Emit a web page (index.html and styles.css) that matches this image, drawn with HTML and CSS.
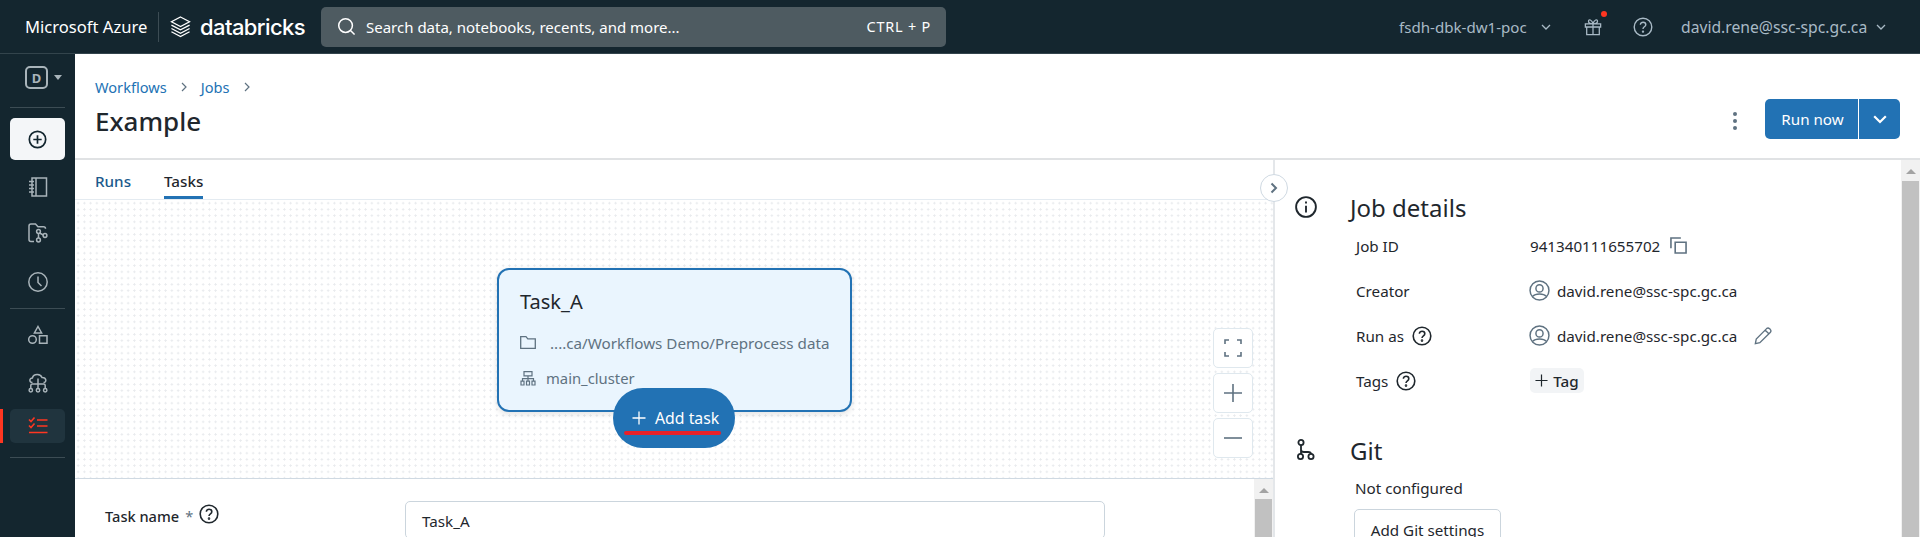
FILE: index.html
```html
<!DOCTYPE html>
<html lang="en">
<head>
    <meta charset="UTF-8" />
    <title>Example - Databricks</title>
    <link rel="stylesheet" href="styles.css">
</head>
<body>

<header class="topbar">
    <span class="brand-azure">Microsoft Azure</span>
    <span class="brand-sep"></span>
    <svg class="brand-logo" viewBox="0 0 22 24" fill="none" stroke="#fff" stroke-width="1.3">
        <path d="M11 1.5 20.5 6.5 11 11.5 1.5 6.5Z"/>
        <path d="M1.5 10 11 15 20.5 10"/>
        <path d="M1.5 13.5 11 18.5 20.5 13.5"/>
        <path d="M1.5 17 11 22 20.5 17"/>
    </svg>
    <span class="brand-name">databricks</span>
    <div class="search">
        <svg class="search-icon" viewBox="0 0 20 20" fill="none" stroke="#fff" stroke-width="1.6">
            <circle cx="9" cy="9" r="7.2"/>
            <path d="M14.2 14.2 18.5 18.5"/>
        </svg>
        <span class="search-text">Search data, notebooks, recents, and more...</span>
        <span class="search-key">CTRL + P</span>
    </div>
    <div class="top-right">
        <span class="top-label">fsdh-dbk-dw1-poc</span>
        <svg class="top-chevron" viewBox="0 0 10 6" fill="none" stroke="#a9bac6" stroke-width="1.3"><path d="M1 1 5 5 9 1"/></svg>
        <span class="gift">
            <svg viewBox="0 0 20 20" fill="none" stroke="#a9bac6" stroke-width="1.4">
                <path d="M1.5 6.5H18.5V10H1.5ZM3 10V18.5H17V10M10 6.5V18.5M10 6.5C7 6.5 5 5.5 5 3.6 5 1.2 8.8 1.4 10 6.5 11.2 1.4 15 1.2 15 3.6 15 5.5 13 6.5 10 6.5Z"/>
            </svg>
            <i class="gift-dot"></i>
        </span>
        <svg class="top-help" viewBox="0 0 20 20" fill="none" stroke="#a9bac6" stroke-width="1.4">
            <circle cx="10" cy="10" r="8.8"/>
            <path d="M7.4 7.8C7.4 4.4 12.8 4.6 12.8 7.7 12.8 9.8 10 9.8 10 12"/>
            <circle cx="10" cy="14.6" r=".5"/>
        </svg>
        <span class="top-label top-user">david.rene@ssc-spc.gc.ca</span>
        <svg class="top-chevron" viewBox="0 0 10 6" fill="none" stroke="#a9bac6" stroke-width="1.3"><path d="M1 1 5 5 9 1"/></svg>
    </div>
</header>

<div class="app">
    <nav class="sidebar">
        <div class="workspace">
            <span class="workspace-badge">D</span>
            <i class="workspace-caret"></i>
        </div>
        <div class="side-rule"></div>
        <div class="side-new">
            <svg viewBox="0 0 20 20" fill="none" stroke="#13262f" stroke-width="1.8">
                <circle cx="10" cy="10" r="8.6"/>
                <path d="M10 5.6V14.4M5.6 10H14.4"/>
            </svg>
        </div>
        <div class="side-item side-first">
            <svg viewBox="0 0 20 20" fill="none" stroke="#a9b4ba" stroke-width="1.5">
                <path d="M4 1H18.5V19H4ZM8 1V19M1 4.5H6M1 8H6M1 11.5H6M1 15H6"/>
            </svg>
        </div>
        <div class="side-item side-repo">
            <svg viewBox="0 0 20 20" fill="none" stroke="#a9b4ba" stroke-width="1.5">
                <path d="M6 18.5H3C1.8 18.5 1 17.7 1 16.5V3C1 1.8 1.8 1 3 1H7.5L10 3.8H15.5C16.7 3.8 17.5 4.6 17.5 5.8"/>
                <circle cx="10.5" cy="8.5" r="1.9"/>
                <circle cx="10.5" cy="17" r="1.9"/>
                <circle cx="17" cy="12.5" r="1.9"/>
                <path d="M10.5 10.4V15.1M11.6 10 15.3 12"/>
            </svg>
        </div>
        <div class="side-item side-clock">
            <svg viewBox="0 0 20 20" fill="none" stroke="#a9b4ba" stroke-width="1.5">
                <circle cx="10" cy="10" r="9.2"/>
                <path d="M10 4.5V10.5L13.5 14"/>
            </svg>
        </div>
        <div class="side-rule side-rule-mid"></div>
        <div class="side-item side-shapes">
            <svg viewBox="0 0 20 20" fill="none" stroke="#a9b4ba" stroke-width="1.5">
                <path d="M10 1.5 13.6 8H6.4Z"/>
                <circle cx="4.5" cy="14.5" r="3.8"/>
                <path d="M11.5 10.8H19V18.2H11.5Z"/>
            </svg>
        </div>
        <div class="side-item side-cloud">
            <svg viewBox="0 0 20 20" fill="none" stroke="#a9b4ba" stroke-width="1.5">
                <path d="M4.5 9.5C1 9.5 1 5 4.4 5 5.4 .6 12.6 .4 14 4.6 18.6 4.4 19 9.5 15.5 9.5"/>
                <path d="M10 5.5V16M2.8 16V12.5C2.8 11.6 3.4 11 4.3 11H15.7C16.6 11 17.2 11.6 17.2 12.5V16"/>
                <circle cx="2.8" cy="17.3" r="1.7"/>
                <circle cx="10" cy="17.3" r="1.7"/>
                <circle cx="17.2" cy="17.3" r="1.7"/>
            </svg>
        </div>
        <div class="side-item side-active">
            <svg viewBox="0 0 20 20" fill="none" stroke="#ff3621" stroke-width="1.6">
                <path d="M1 3.5 3 5.5 6.5 1.5M1 9.5 3 11.5 6.5 7.5M9 4H19.5M9 10H19.5M1 16.5H19.5"/>
            </svg>
        </div>
        <div class="side-rule side-rule-end"></div>
    </nav>

    <main class="page">
        <section class="page-head">
            <div>
                <div class="crumbs">
                    <a>Workflows</a>
                    <svg viewBox="0 0 6 10" fill="none" stroke="#5f7281" stroke-width="1.2"><path d="M1 1 5 5 1 9"/></svg>
                    <a>Jobs</a>
                    <svg viewBox="0 0 6 10" fill="none" stroke="#5f7281" stroke-width="1.2"><path d="M1 1 5 5 1 9"/></svg>
                </div>
                <h1 class="page-title">Example</h1>
            </div>
            <div class="page-actions">
                <span class="kebab"><i></i><i></i><i></i></span>
                <div class="run-btn">
                    <span class="run-main">Run now</span>
                    <span class="run-more">
                        <svg viewBox="0 0 14 9" fill="none" stroke="#fff" stroke-width="2.2"><path d="M1.2 1.2 7 7 12.8 1.2"/></svg>
                    </span>
                </div>
            </div>
        </section>

        <section class="split">
            <div class="left">
                <div class="tabs">
                    <span class="tab">Runs</span>
                    <span class="tab tab-on">Tasks</span>
                </div>
                <div class="canvas">
                    <div class="task-node">
                        <div class="task-name">Task_A</div>
                        <div class="task-line task-path">
                            <svg viewBox="0 0 16 13" fill="none" stroke="#5f7281" stroke-width="1.3"><path d="M.7.7H6L7.8 2.8H15.3V12.3H.7Z"/></svg>
                            <span>....ca/Workflows Demo/Preprocess data</span>
                        </div>
                        <div class="task-line task-cluster">
                            <svg viewBox="0 0 16 15" fill="none" stroke="#5f7281" stroke-width="1.2"><path d="M4 .7H12V4.8H4ZM8 4.8V10M2.5 10V7.6H13.5V10M1 10.2H4V14H1ZM6.5 10.2H9.5V14H6.5ZM12 10.2H15V14H12Z"/></svg>
                            <span>main_cluster</span>
                        </div>
                    </div>
                    <div class="add-task">
                        <svg viewBox="0 0 14 14" fill="none" stroke="#fff" stroke-width="1.3"><path d="M7 .5V13.5M.5 7H13.5"/></svg>
                        <span>Add task</span>
                        <i class="add-mark"></i>
                    </div>
                    <div class="zoom-tools">
                        <span class="zoom-btn">
                            <svg viewBox="0 0 18 18" fill="none" stroke="#5f7281" stroke-width="1.6"><path d="M1 5V1H5M13 1H17V5M17 13V17H13M5 17H1V13"/></svg>
                        </span>
                        <span class="zoom-btn">
                            <svg viewBox="0 0 18 18" fill="none" stroke="#5f7281" stroke-width="1.6"><path d="M9 0V18M0 9H18"/></svg>
                        </span>
                        <span class="zoom-btn">
                            <svg viewBox="0 0 18 18" fill="none" stroke="#5f7281" stroke-width="1.6"><path d="M0 9H18"/></svg>
                        </span>
                    </div>
                </div>
                <div class="task-form">
                    <div class="form-body">
                        <label class="form-label">Task name <em>*</em>
                            <svg class="help" viewBox="0 0 20 20" fill="none" stroke="#1f272d" stroke-width="1.6">
                                <circle cx="10" cy="10" r="8.8"/>
                                <path d="M7.4 7.8C7.4 4.4 12.8 4.6 12.8 7.7 12.8 9.8 10 9.8 10 12"/>
                                <circle cx="10" cy="14.6" r=".5"/>
                            </svg>
                        </label>
                        <div class="form-input">Task_A</div>
                    </div>
                    <div class="scrollbar">
                        <i class="scroll-up"></i>
                        <i class="scroll-thumb"></i>
                    </div>
                </div>
            </div>

            <aside class="details">
                <span class="collapse">
                    <svg viewBox="0 0 8 12" fill="none" stroke="#5f7281" stroke-width="2"><path d="M1.5 1.5 6 6 1.5 10.5"/></svg>
                </span>
                <div class="details-body">
                    <div class="section-head">
                        <svg viewBox="0 0 20 20" fill="none" stroke="#1f272d" stroke-width="1.7">
                            <circle cx="10" cy="10" r="9"/>
                            <path d="M10 8.8V15M10 5V6.8"/>
                        </svg>
                        <h2>Job details</h2>
                    </div>
                    <div class="row">
                        <span class="row-label">Job ID</span>
                        <span class="row-value">941340111655702
                            <svg class="copy" viewBox="0 0 18 18" fill="none" stroke="#5f7281" stroke-width="1.7"><path d="M11.5 1H1V12M5.5 5.5H17V17H5.5Z"/></svg>
                        </span>
                    </div>
                    <div class="row">
                        <span class="row-label">Creator</span>
                        <span class="row-value">
                            <svg class="avatar" viewBox="0 0 20 20" fill="none" stroke="#5f7281" stroke-width="1.4">
                                <circle cx="10" cy="10" r="9"/>
                                <circle cx="10" cy="8" r="3.4"/>
                                <path d="M3.6 15.5C6 12.6 14 12.6 16.4 15.5"/>
                            </svg>
                            david.rene@ssc-spc.gc.ca
                        </span>
                    </div>
                    <div class="row">
                        <span class="row-label">Run as
                            <svg class="help" viewBox="0 0 20 20" fill="none" stroke="#1f272d" stroke-width="1.6">
                                <circle cx="10" cy="10" r="8.8"/>
                                <path d="M7.4 7.8C7.4 4.4 12.8 4.6 12.8 7.7 12.8 9.8 10 9.8 10 12"/>
                                <circle cx="10" cy="14.6" r=".5"/>
                            </svg>
                        </span>
                        <span class="row-value">
                            <svg class="avatar" viewBox="0 0 20 20" fill="none" stroke="#5f7281" stroke-width="1.4">
                                <circle cx="10" cy="10" r="9"/>
                                <circle cx="10" cy="8" r="3.4"/>
                                <path d="M3.6 15.5C6 12.6 14 12.6 16.4 15.5"/>
                            </svg>
                            david.rene@ssc-spc.gc.ca
                            <svg class="pencil" viewBox="0 0 20 20" fill="none" stroke="#5f7281" stroke-width="1.5"><path d="M1.5 18.5 2.5 13.5 14 1.8C15 .9 16.2 .9 17.3 1.9L18 2.6C19 3.7 19 5 18 6L6.5 17.5ZM12.5 3.5 16.5 7.5"/></svg>
                        </span>
                    </div>
                    <div class="row">
                        <span class="row-label">Tags
                            <svg class="help" viewBox="0 0 20 20" fill="none" stroke="#1f272d" stroke-width="1.6">
                                <circle cx="10" cy="10" r="8.8"/>
                                <path d="M7.4 7.8C7.4 4.4 12.8 4.6 12.8 7.7 12.8 9.8 10 9.8 10 12"/>
                                <circle cx="10" cy="14.6" r=".5"/>
                            </svg>
                        </span>
                        <span class="row-value">
                            <span class="tag-btn">
                                <svg viewBox="0 0 14 14" fill="none" stroke="#1f272d" stroke-width="1.3"><path d="M7 .5V13.5M.5 7H13.5"/></svg>
                                Tag
                            </span>
                        </span>
                    </div>
                    <div class="section-head section-git">
                        <svg viewBox="0 0 20 22" fill="none" stroke="#1f272d" stroke-width="1.8">
                            <circle cx="5" cy="3.5" r="2.6"/>
                            <circle cx="4.5" cy="17.5" r="2.6"/>
                            <circle cx="15" cy="17.5" r="2.6"/>
                            <path d="M5 6V15M5 10.5C5 12.5 6 13 8 13H12C13.8 13 15 13.5 15 15"/>
                        </svg>
                        <h2>Git</h2>
                    </div>
                    <p class="git-note">Not configured</p>
                    <div class="git-btn">Add Git settings</div>
                </div>
                <div class="scrollbar scrollbar-main">
                    <i class="scroll-up"></i>
                    <i class="scroll-thumb"></i>
                </div>
            </aside>
        </section>
    </main>
</div>

</body>
</html>
```

FILE: styles.css
```css
* {
    box-sizing: border-box;
}

html, body {
    height: 100%;
    margin: 0;
    overflow: hidden;
}

body {
    display: flex;
    flex-direction: column;
    font-family: "Noto Sans", "Open Sans", sans-serif;
    font-size: 15.2px;
    color: #1f272d;
    background-color: #fff;
}

/* top bar */
.topbar {
    height: 54px;
    flex: none;
    display: flex;
    align-items: center;
    padding-left: 25px;
    color: #fff;
    background-color: #14262f;
    border-bottom: 1px solid #33444c;
}

.brand-azure {
    width: 123px;
    font-size: 16.6px;
    white-space: nowrap;
}

.brand-sep {
    width: 1px;
    height: 30px;
    margin: 0 11px 0 10px;
    background-color: #3c4c54;
}

.brand-logo {
    width: 21px;
    height: 24px;
    margin-right: 9px;
}

.brand-name {
    width: 121px;
    font-family: "Inter", sans-serif;
    font-size: 22px;
    font-weight: 500;
    letter-spacing: -.6px;
}

.search {
    width: 625px;
    height: 40px;
    display: flex;
    align-items: center;
    padding: 0 15px 0 16px;
    font-size: 15px;
    background-color: #4e5b61;
    border-radius: 5px;
}

.search-icon {
    width: 19px;
    height: 19px;
    margin-right: 10px;
}

.search-text {
    flex: 1;
}

.search-key {
    font-size: 14.4px;
    letter-spacing: .8px;
}

.top-right {
    flex: 1;
    display: flex;
    align-items: center;
    padding-left: 453px;
    color: #a9bac6;
}

.top-label {
    width: 134px;
    font-size: 15.1px;
    white-space: nowrap;
}

.top-chevron {
    width: 10px;
    height: 6px;
    margin-left: 8px;
}

.gift {
    position: relative;
    width: 18px;
    height: 18px;
    margin-left: 33px;
}

.gift svg {
    display: block;
    width: 18px;
    height: 18px;
}

.gift-dot {
    position: absolute;
    top: -7px;
    right: -5px;
    width: 6px;
    height: 6px;
    background-color: #ff3621;
    border-radius: 50%;
}

.top-help {
    width: 20px;
    height: 20px;
    margin-left: 31px;
}

.top-user {
    width: 187px;
    margin-left: 28px;
    font-size: 15.7px;
}

/* left nav */
.app {
    flex: 1;
    min-height: 0;
    display: flex;
}

.sidebar {
    width: 75px;
    flex: none;
    padding-left: 10px;
    background-color: #14262f;
}

.workspace {
    height: 53px;
    display: flex;
    align-items: center;
    padding: 0 0 6px 15px;
}

.workspace-badge {
    width: 23px;
    height: 23px;
    display: flex;
    align-items: center;
    justify-content: center;
    font-size: 13px;
    font-weight: 700;
    color: #a9b4ba;
    border: 2px solid #a9b4ba;
    border-radius: 5px;
}

.workspace-caret {
    margin-left: 6px;
    border-style: solid;
    border-width: 5px 4.5px 0;
    border-color: #a9b4ba transparent transparent;
}

.side-rule {
    width: 55px;
    height: 1px;
    background-color: #3c4c54;
}

.side-new {
    width: 55px;
    height: 42px;
    margin-top: 10px;
    display: flex;
    align-items: center;
    justify-content: center;
    background-color: #f4f6f8;
    border-radius: 5px;
}

.side-new svg {
    width: 19px;
    height: 19px;
}

.side-item {
    width: 55px;
    height: 34px;
    display: flex;
    align-items: center;
    justify-content: center;
}

.side-item svg {
    width: 20px;
    height: 20px;
}

.side-first {
    margin-top: 10px;
}

.side-repo {
    margin-top: 12px;
}

.side-clock {
    margin-top: 15px;
}

.side-rule-mid {
    margin-top: 9px;
}

.side-shapes {
    margin-top: 9px;
}

.side-cloud {
    margin-top: 14px;
}

.side-active {
    position: relative;
    margin-top: 9px;
    background-color: #20343e;
    border-radius: 5px;
}

.side-active::before {
    content: "";
    position: absolute;
    top: 0;
    bottom: 0;
    left: -10px;
    width: 3px;
    background-color: #ff3621;
}

.side-rule-end {
    margin-top: 14px;
}

/* page header */
.page {
    flex: 1;
    min-width: 0;
    display: flex;
    flex-direction: column;
}

.page-head {
    height: 106px;
    flex: none;
    display: flex;
    justify-content: space-between;
    padding: 23px 20px 0;
    border-bottom: 2px solid #e0e2e4;
}

.crumbs {
    height: 20px;
    display: flex;
    align-items: center;
    font-size: 14.6px;
    color: #2272b4;
}

.crumbs svg {
    width: 6px;
    height: 10px;
    margin: 0 14px;
}

.page-title {
    margin: 5px 0 0;
    font-size: 26px;
    font-weight: 500;
    line-height: 38px;
}

.page-actions {
    display: flex;
    align-items: flex-start;
    padding-top: 22px;
}

.kebab {
    width: 5px;
    margin-top: 13px;
    margin-right: 27px;
    display: flex;
    flex-direction: column;
    gap: 3px;
}

.kebab i {
    width: 4px;
    height: 4px;
    background-color: #5f7281;
    border-radius: 50%;
}

.run-btn {
    width: 135px;
    height: 40px;
    display: flex;
    color: #fff;
    background-color: #2272b4;
    border-radius: 5px;
}

.run-main {
    width: 94px;
    display: flex;
    align-items: center;
    justify-content: center;
    padding-left: 2px;
    border-right: 1px solid #fff;
}

.run-more {
    flex: 1;
    display: flex;
    align-items: center;
    justify-content: center;
}

.run-more svg {
    width: 14px;
    height: 9px;
}

/* split area */
.split {
    flex: 1;
    min-height: 0;
    display: flex;
}

.left {
    width: 1198px;
    flex: none;
    display: flex;
    flex-direction: column;
}

.tabs {
    height: 40px;
    flex: none;
    display: flex;
    gap: 33px;
    padding-left: 20px;
    border-bottom: 1px solid #e4ebf1;
}

.tab {
    height: 39px;
    padding-top: 11px;
    font-weight: 500;
    color: #1b5a8c;
}

.tab-on {
    color: #1f272d;
    border-bottom: 3px solid #2272b4;
}

.canvas {
    position: relative;
    height: 279px;
    flex: none;
    background-color: #fff;
    background-image: radial-gradient(circle, #e9ebee 1px, transparent 1.2px);
    background-size: 6.25px 6.25px;
    border-bottom: 1px solid #cfd9e2;
}

.task-node {
    position: absolute;
    top: 68px;
    left: 422px;
    width: 355px;
    height: 144px;
    padding: 17px 21px;
    background-color: #eaf5fe;
    border: 2px solid #2272b4;
    border-radius: 12px;
    box-shadow: 0 2px 6px rgba(0, 0, 0, 0.12);
}

.task-name {
    font-size: 20px;
    line-height: 30px;
}

.task-line {
    display: flex;
    align-items: center;
    color: #5f7281;
    white-space: nowrap;
}

.task-line svg {
    flex: none;
    width: 16px;
}

.task-path {
    margin-top: 16px;
    gap: 14px;
    height: 20px;
}

.task-path svg {
    height: 13px;
    margin-top: -2px;
}

.task-cluster {
    margin-top: 15px;
    gap: 10px;
    height: 20px;
    font-size: 14.8px;
}

.task-cluster svg {
    height: 15px;
}

.add-task {
    position: absolute;
    top: 188px;
    left: 538px;
    width: 122px;
    height: 60px;
    display: flex;
    align-items: center;
    gap: 9px;
    padding-left: 19px;
    font-size: 15.8px;
    color: #fff;
    background-color: #2272b4;
    border-radius: 30px;
}

.add-task svg {
    width: 14px;
    height: 14px;
}

.add-mark {
    position: absolute;
    top: 43px;
    left: 11px;
    width: 97px;
    height: 4px;
    background-color: #e8212a;
    border-radius: 2px;
}

.zoom-tools {
    position: absolute;
    top: 128px;
    left: 1138px;
    display: flex;
    flex-direction: column;
    gap: 5px;
}

.zoom-btn {
    width: 40px;
    height: 40px;
    display: flex;
    align-items: center;
    justify-content: center;
    background-color: #fff;
    border: 1px solid #dfe8ee;
    border-radius: 5px;
}

.zoom-btn svg {
    width: 18px;
    height: 18px;
}

.task-form {
    flex: 1;
    min-height: 0;
    display: flex;
}

.form-body {
    flex: 1;
    display: grid;
    grid-template-columns: 300px 700px;
    padding: 23px 0 0 30px;
}

.form-label {
    display: flex;
    align-items: flex-start;
    gap: 6px;
    height: 32px;
    padding-top: 4px;
    font-size: 14.6px;
    font-weight: 500;
}

.form-label em {
    font-style: normal;
    font-weight: 400;
    color: #5f7281;
}

.form-label .help {
    margin-top: -2px;
}

.form-input {
    height: 38px;
    margin-top: -1px;
    padding: 9px 16px;
    border: 1px solid #cbd5dd;
    border-radius: 5px;
}

.help {
    width: 20px;
    height: 20px;
}

/* fake scrollbars, same look as windows ones */
.scrollbar {
    width: 19px;
    flex: none;
    display: flex;
    flex-direction: column;
    align-items: center;
    padding-top: 9px;
    background-color: #f1f1f1;
}

.scroll-up {
    border-style: solid;
    border-width: 0 5px 5px;
    border-color: transparent transparent #a3a3a3;
}

.scroll-thumb {
    width: 17px;
    flex: 1;
    margin-top: 6px;
    background-color: #c1c1c1;
}

.scrollbar-main .scroll-thumb {
    margin-top: 7px;
}

/* job details panel */
.details {
    position: relative;
    flex: 1;
    min-width: 0;
    display: flex;
    border-left: 2px solid #e4e7ea;
}

.collapse {
    position: absolute;
    top: 14px;
    left: -15px;
    width: 28px;
    height: 28px;
    display: flex;
    align-items: center;
    justify-content: center;
    background-color: #fff;
    border: 1px solid #cfd9e2;
    border-radius: 50%;
}

.collapse svg {
    width: 8px;
    height: 12px;
}

.details-body {
    flex: 1;
    min-width: 0;
    padding: 32px 0 0 20px;
}

.section-head {
    height: 30px;
    display: flex;
    align-items: center;
    gap: 33px;
}

.section-head svg {
    width: 22px;
    height: 22px;
}

.section-head h2 {
    margin: 0;
    font-size: 24px;
    font-weight: 400;
}

.section-git {
    margin-top: 32px;
}

.row {
    height: 45px;
    display: grid;
    grid-template-columns: 174px 1fr;
    align-items: center;
    padding-left: 61px;
}

.section-head + .row {
    margin-top: 1px;
}

.row-label {
    display: flex;
    align-items: center;
    gap: 8px;
}

.row-value {
    display: flex;
    align-items: center;
    gap: 7px;
}

.avatar {
    width: 21px;
    height: 21px;
    margin-left: -1px;
}

.copy {
    width: 17px;
    height: 17px;
    margin-left: 3px;
}

.pencil {
    width: 18px;
    height: 20px;
    margin-left: 10px;
}

.tag-btn {
    width: 54px;
    height: 25px;
    display: flex;
    align-items: center;
    justify-content: center;
    gap: 5px;
    font-weight: 500;
    background-color: #f2f4f6;
    border-radius: 5px;
}

.tag-btn svg {
    width: 13px;
    height: 13px;
}

.git-note {
    margin: 13px 0 0 60px;
    line-height: 20px;
}

.git-btn {
    width: 147px;
    height: 40px;
    margin: 11px 0 0 59px;
    padding-top: 2px;
    display: flex;
    align-items: center;
    justify-content: center;
    border: 1px solid #cbd5dd;
    border-radius: 5px;
}
```
